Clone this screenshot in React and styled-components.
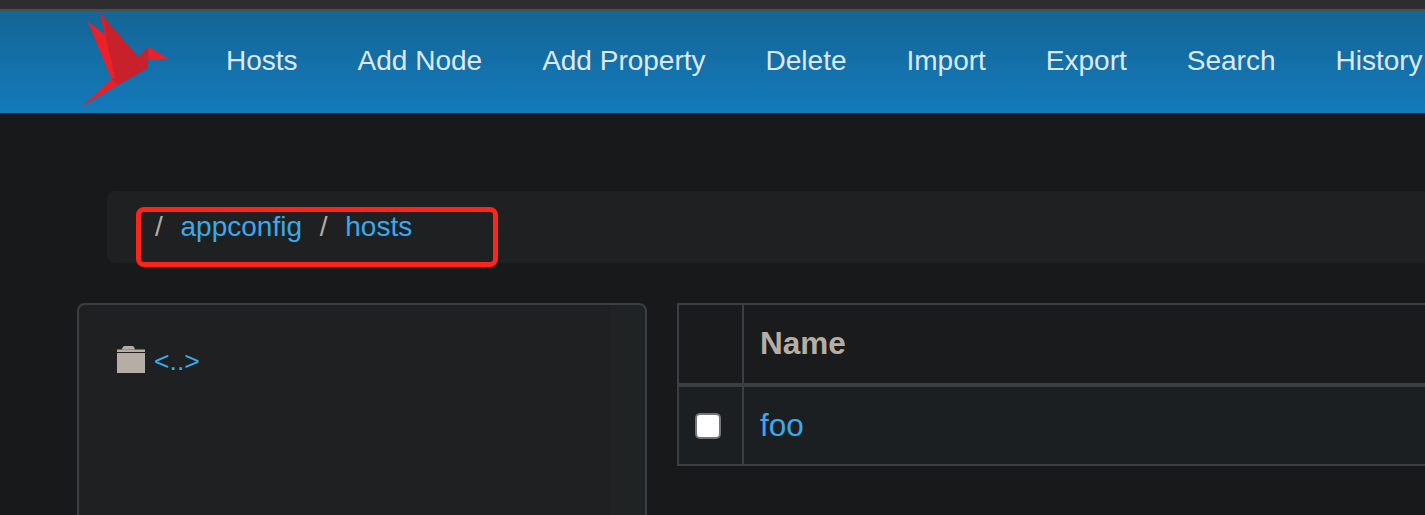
import React from 'react'
import styled, { createGlobalStyle } from 'styled-components'

const navItems = ['Hosts', 'Add Node', 'Add Property', 'Delete', 'Import', 'Export', 'Search', 'History']

export default function App() {
  return (
    <>
      <GlobalStyle />
      <Page>
        <TopStrip />
        <NavBar>
          <Brand>
            <svg width="90" height="96" viewBox="80 12 90 96">
              <polygon points="100,12.7 138.3,56.7 148.3,46.7 148.3,60 147.7,68.3 118.3,85 111.7,79.3 105,35" fill="#c8212b" />
              <polygon points="87.7,21 105,35 109,52 115.5,78 111.7,79.3" fill="#ee2027" />
              <polygon points="105,35 100,12.7 104,18 109,52" fill="#d9212a" />
              <polygon points="111.7,79.3 118.3,85 81.7,106.7" fill="#e8202a" />
              <polygon points="148.3,46.7 168.3,59 148.3,60" fill="#ee1f26" />
            </svg>
          </Brand>
          <NavList>
            {navItems.map((item) => (
              <NavLink key={item}>{item}</NavLink>
            ))}
          </NavList>
        </NavBar>

        <Content>
          <Breadcrumb>
            <Crumb>/</Crumb>
            <CrumbLink>appconfig</CrumbLink>
            <Crumb>/</Crumb>
            <CrumbLink>hosts</CrumbLink>
            <Highlight />
          </Breadcrumb>

          <Columns>
            <TreePanel>
              <TreeRow>
                <svg width="29" height="27" viewBox="0 0 29 27">
                  <path d="M4.5 3.5 L6 1 Q6.5 0 8 0 H15 Q16.5 0 17 1 L18 3.5 Z" fill="#b6aea4" />
                  <rect x="0" y="3.5" width="28" height="2.5" fill="#b6aea4" />
                  <rect x="0" y="7" width="28" height="20" fill="#b6aea4" />
                </svg>
                <TreeLink>&lt;..&gt;</TreeLink>
              </TreeRow>
            </TreePanel>

            <Table>
              <thead>
                <tr>
                  <HeadCell $narrow />
                  <HeadCell>Name</HeadCell>
                </tr>
              </thead>
              <tbody>
                <tr>
                  <BodyCell $narrow>
                    <CheckBox />
                  </BodyCell>
                  <BodyCell>
                    <RowLink>foo</RowLink>
                  </BodyCell>
                </tr>
              </tbody>
            </Table>
          </Columns>
        </Content>
      </Page>
    </>
  )
}

const GlobalStyle = createGlobalStyle`
  html, body {
    margin: 0;
    padding: 0;
    background: #18191b;
    overflow: hidden;
  }
  * {
    box-sizing: border-box;
  }
`;

const Page = styled.div`
  width: 1425px;
  height: 515px;
  overflow: hidden;
  background: #18191b;
  font-family: "Liberation Sans", Arial, sans-serif;
`;

const TopStrip = styled.div`
  width: 1700px;
  height: 11px;
  background: #2d2d2d;
  border-bottom: 2px solid #4e4e4e;
`;

const NavBar = styled.div`
  width: 1700px;
  height: 102px;
  padding-left: 80px;
  display: flex;
  align-items: flex-start;
  background: linear-gradient(to bottom, #146595, #137abb);
`;

const Brand = styled.div`
  width: 146px;
  height: 102px;
  flex-shrink: 0;
  padding-top: 1px;

  svg {
    filter: blur(0.4px);
  }
`;

const NavList = styled.div`
  display: flex;
  gap: 60px;
  height: 100%;
  align-items: center;
  padding-bottom: 3px;
`;

const NavLink = styled.a`
  font-size: 28px;
  color: #dfe8ee;
  white-space: nowrap;
`;

const Content = styled.div`
  width: 1700px;
  padding: 78px 0 0 77px;
`;

const Breadcrumb = styled.div`
  position: relative;
  height: 72px;
  margin-left: 30px;
  padding: 20px 0 0 48px;
  display: flex;
  align-items: flex-start;
  gap: 17.75px;
  font-size: 28px;
  line-height: 32px;
  background: #1e2022;
  border-radius: 8px;
`;

const Crumb = styled.span`
  color: #b6aea4;
`;

const CrumbLink = styled.a`
  color: #3aa9ee;
`;

const Highlight = styled.div`
  position: absolute;
  left: 28.5px;
  top: 16px;
  width: 362px;
  height: 59.5px;
  border: 5.5px solid #ff2318;
  border-radius: 8px;
`;

const Columns = styled.div`
  display: flex;
  align-items: flex-start;
  gap: 30px;
  margin-top: 40px;
`;

const TreePanel = styled.div`
  width: 570px;
  height: 400px;
  flex-shrink: 0;
  padding: 41px 38px;
  border: 2px solid #3c3f41;
  border-radius: 8px;
  background: linear-gradient(to right, #1e2022 94%, #1f2324 94%);
`;

const TreeRow = styled.div`
  display: flex;
  align-items: flex-start;
  gap: 8px;
`;

const TreeLink = styled.a`
  font-size: 26.6px;
  line-height: 30px;
  color: #3aa9ee;
`;

const Table = styled.table`
  width: 1000px;
  border-collapse: collapse;
  border: 2px solid #3c3f41;
`;

const HeadCell = styled.th`
  height: 81px;
  width: ${(p) => (p.$narrow ? '65px' : 'auto')};
  padding: 0 16px 1px;
  border: 2px solid #3c3f41;
  border-bottom-width: 4px;
  background: #1a1b1d;
  color: #b6aea4;
  font-size: 31.5px;
  font-weight: 700;
  text-align: left;
`;

const BodyCell = styled.td`
  height: 80px;
  width: ${(p) => (p.$narrow ? '65px' : 'auto')};
  padding: 0 16px;
  border: 2px solid #3c3f41;
  background: #1c1f21;
  font-size: 31.5px;
`;

const CheckBox = styled.div`
  width: 26px;
  height: 26px;
  border: 2px solid #767676;
  border-radius: 5px;
  background: #fff;
`;

const RowLink = styled.a`
  color: #3aa9ee;
`;
